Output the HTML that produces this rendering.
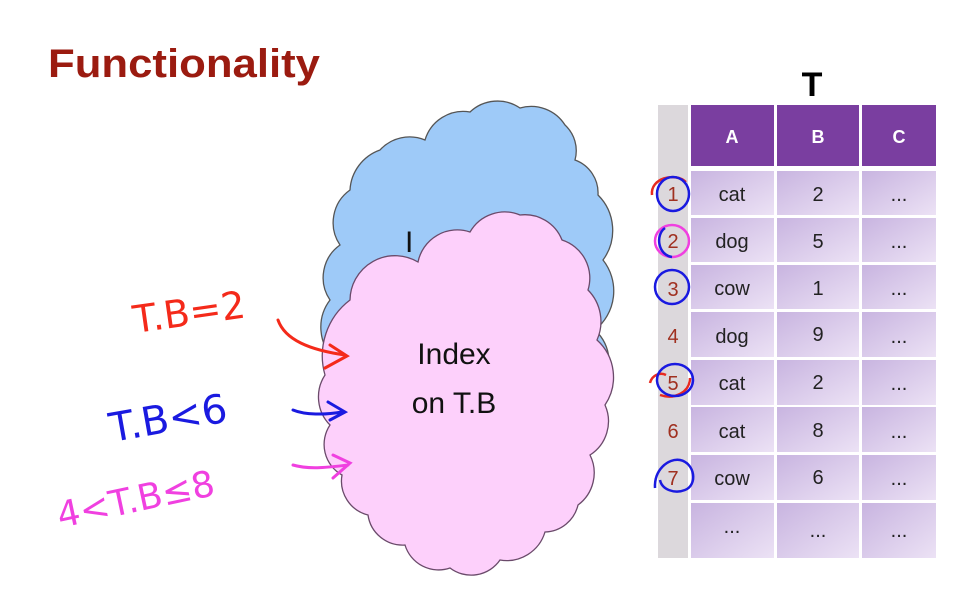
<!DOCTYPE html>
<html><head><meta charset="utf-8"><style>
html,body{margin:0;padding:0;background:#fff;}
svg{display:block;}
</style></head><body>
<svg width="978" height="607" viewBox="0 0 978 607" xmlns="http://www.w3.org/2000/svg" font-family="Liberation Sans, sans-serif">
<defs>
<linearGradient id="g" x1="0" y1="0" x2="1" y2="1">
<stop offset="0" stop-color="#c8b4e0"/><stop offset="1" stop-color="#ece2f5"/>
</linearGradient>
</defs>
<rect width="978" height="607" fill="#fff"/>
<text x="48" y="77" font-size="40" font-weight="bold" fill="#9b1b10" textLength="272" lengthAdjust="spacingAndGlyphs">Functionality</text>

<path fill="#9ecaf8" stroke="#555" stroke-width="1.3" d="M340 245 A40 40 0 0 1 350 190 A45 45 0 0 1 380 150 A40 40 0 0 1 425 140 A40 40 0 0 1 470 112 A40 40 0 0 1 520 108 A40 40 0 0 1 565 125 A35 35 0 0 1 575 160 A35 35 0 0 1 598 195 A50 50 0 0 1 603 260 A50 50 0 0 1 595 330 A45 45 0 0 1 600 390 A45 45 0 0 1 580 440 A40 40 0 0 1 540 458 L450 450 L380 420 L335 360 A45 45 0 0 1 330 300 A40 40 0 0 1 340 245 Z"/>
<text x="405" y="252" font-size="30" fill="#111">I</text>

<path fill="#fdd0fb" stroke="#6a4a6a" stroke-width="1.3" d="M350 300 A45 45 0 0 1 418 262 A40 40 0 0 1 470 232 A40 40 0 0 1 520 215 A40 40 0 0 1 562 240 A40 40 0 0 1 588 290 A45 45 0 0 1 597 340 A50 50 0 0 1 605 405 A40 40 0 0 1 590 455 A40 40 0 0 1 578 505 A35 35 0 0 1 545 532 A40 40 0 0 1 500 560 A35 35 0 0 1 450 568 A35 35 0 0 1 405 545 A35 35 0 0 1 368 515 A35 35 0 0 1 342 475 A35 35 0 0 1 330 425 A40 40 0 0 1 325 375 A70 70 0 0 1 350 300 Z"/>
<text x="454" y="364" font-size="30" fill="#111" text-anchor="middle">Index</text>
<text x="454" y="413" font-size="30" fill="#111" text-anchor="middle">on T.B</text>

<g font-family="DejaVu Sans, sans-serif">
<text x="135" y="333" font-size="38" fill="#f42a1a" transform="rotate(-8 135 333)">T.B=2</text>
<text x="112" y="442" font-size="40" fill="#1a1ae0" transform="rotate(-10 112 442)">T.B&lt;6</text>
<text x="60" y="528" font-size="36" fill="#f040e0" transform="rotate(-12 60 528)">4&lt;T.B≤8</text>
</g>
<g fill="none" stroke-width="3" stroke-linecap="round">
<path d="M278 320 C285 340 310 350 345 355 M330 345 L347 356 L325 368" stroke="#f42a1a"/>
<path d="M293 410 C305 415 325 415 342 412 M328 402 L345 412 L330 420" stroke="#1a1ae0"/>
<path d="M293 465 C310 470 330 467 348 465 M333 455 L350 463 L333 478" stroke="#f040e0"/>
</g>

<text x="812" y="96" font-size="34" font-weight="bold" text-anchor="middle" fill="#000">T</text>
<rect x="658" y="105" width="30" height="453" fill="#dcd8dc"/>
<g fill="#7a3ea0">
<rect x="691" y="105" width="83" height="61"/><rect x="777" y="105" width="82" height="61"/><rect x="862" y="105" width="74" height="61"/>
</g>
<g fill="#fff" font-size="18" font-weight="bold" text-anchor="middle">
<text x="732" y="143">A</text><text x="818" y="143">B</text><text x="899" y="143">C</text>
</g>
<g fill="url(#g)">
<rect x="691" y="171" width="83" height="44"/><rect x="777" y="171" width="82" height="44"/><rect x="862" y="171" width="74" height="44"/>
<rect x="691" y="218" width="83" height="44"/><rect x="777" y="218" width="82" height="44"/><rect x="862" y="218" width="74" height="44"/>
<rect x="691" y="265" width="83" height="44"/><rect x="777" y="265" width="82" height="44"/><rect x="862" y="265" width="74" height="44"/>
<rect x="691" y="312" width="83" height="45"/><rect x="777" y="312" width="82" height="45"/><rect x="862" y="312" width="74" height="45"/>
<rect x="691" y="360" width="83" height="45"/><rect x="777" y="360" width="82" height="45"/><rect x="862" y="360" width="74" height="45"/>
<rect x="691" y="407" width="83" height="45"/><rect x="777" y="407" width="82" height="45"/><rect x="862" y="407" width="74" height="45"/>
<rect x="691" y="455" width="83" height="45"/><rect x="777" y="455" width="82" height="45"/><rect x="862" y="455" width="74" height="45"/>
<rect x="691" y="503" width="83" height="55"/><rect x="777" y="503" width="82" height="55"/><rect x="862" y="503" width="74" height="55"/>
</g>
<g fill="#222" font-size="20" text-anchor="middle">
<text x="732" y="201">cat</text><text x="818" y="201">2</text><text x="899" y="201">...</text>
<text x="732" y="248">dog</text><text x="818" y="248">5</text><text x="899" y="248">...</text>
<text x="732" y="295">cow</text><text x="818" y="295">1</text><text x="899" y="295">...</text>
<text x="732" y="343">dog</text><text x="818" y="341">9</text><text x="899" y="343">...</text>
<text x="732" y="390">cat</text><text x="818" y="389">2</text><text x="899" y="390">...</text>
<text x="732" y="438">cat</text><text x="818" y="437">8</text><text x="899" y="438">...</text>
<text x="732" y="485">cow</text><text x="818" y="484">6</text><text x="899" y="485">...</text>
<text x="732" y="533">...</text><text x="818" y="537">...</text><text x="899" y="537">...</text>
</g>
<g fill="#a03020" font-size="20" text-anchor="middle">
<text x="673" y="201">1</text><text x="673" y="248">2</text><text x="673" y="296">3</text><text x="673" y="343">4</text>
<text x="673" y="390">5</text><text x="673" y="438">6</text><text x="673" y="485">7</text>
</g>
<g fill="none" stroke-width="2.5">
<path d="M652 195 C650 178 675 172 686 182" stroke="#e82a20"/>
<ellipse cx="673" cy="194" rx="16" ry="17" stroke="#1a1ae0"/>
<ellipse cx="672" cy="241" rx="17" ry="16" stroke="#f040e0"/>
<path d="M665 228 C655 235 658 255 672 257" stroke="#1a1ae0"/>
<ellipse cx="672" cy="287" rx="17" ry="17" stroke="#1a1ae0"/>
<path d="M650 383 C652 375 660 372 666 375 M660 395 C675 400 690 392 690 378" stroke="#e82a20"/>
<ellipse cx="675" cy="380" rx="18" ry="16" stroke="#1a1ae0"/>
<path d="M655 488 C654 470 668 458 680 460 C695 463 698 485 685 490 C675 494 662 490 660 480" stroke="#1a1ae0"/>
</g>
</svg>
</body></html>
